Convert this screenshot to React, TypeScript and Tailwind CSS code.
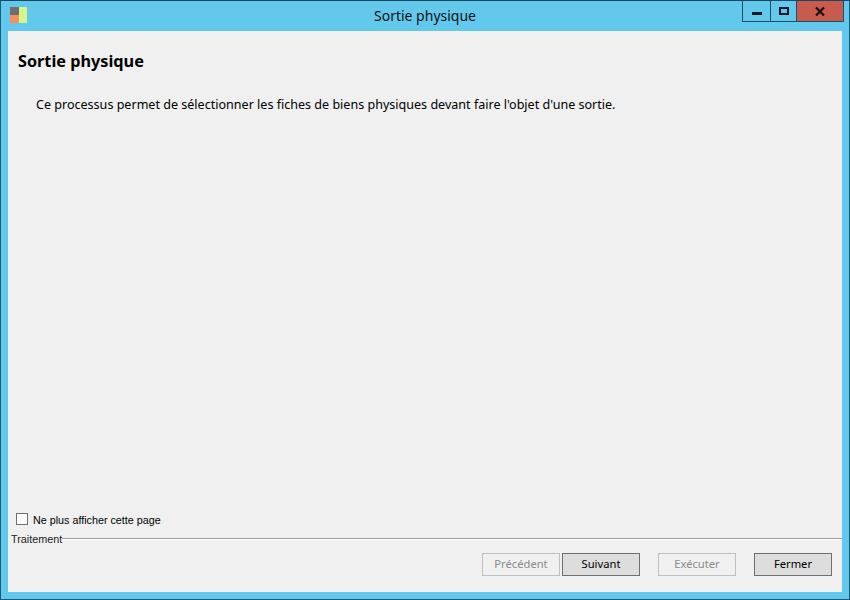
const font = "font-['Noto_Sans',sans-serif]"
const small = "font-['Liberation_Sans',sans-serif]"

function TitleButtons() {
  return (
    <div className="flex h-[21px] border border-t-0 border-[#1d4f66]">
      <button className="flex h-full w-[28px] items-end justify-center border-r border-[#1d4f66] pb-[6px]">
        <span className="block h-[3px] w-[10px] bg-[#0a1626]" />
      </button>
      <button className="flex h-full w-[26px] items-center justify-center border-r border-[#1d4f66] pb-[1px]">
        <span className="block h-[8px] w-[10px] border-2 border-[#0a1626]" />
      </button>
      <button className="flex h-full w-[46px] items-center justify-center bg-[#c75b4d]">
        <svg width="10" height="9" viewBox="0 0 10 9">
          <path d="M1 0.5 L9 8.5 M9 0.5 L1 8.5" stroke="#1a0f0c" strokeWidth="2.2" />
        </svg>
      </button>
    </div>
  )
}

function WizardButton({ label, disabled, className }: { label: string; disabled?: boolean; className?: string }) {
  return (
    <button
      disabled={disabled}
      className={`h-[23px] w-[78px] border text-[11.2px] ${disabled ? 'border-[#bfbfbf] text-[#8a8a8a]' : 'border-[#6f6f6f] bg-[#dddddd] text-black'} ${className ?? ''}`}
    >
      {label}
    </button>
  )
}

export default function App() {
  return (
    <div className={`flex h-[600px] w-[850px] flex-col overflow-hidden border border-[#1b5a78] border-t-[#17485f] bg-[#62c9ec] ${font}`}>
      <div className="relative flex h-[30px] shrink-0 items-start justify-between pl-[9px] pr-[5px]">
        <svg className="mt-[6px]" width="17" height="17" viewBox="0 0 17 17">
          <rect x="0" y="0" width="9" height="8" fill="#6e6e6e" />
          <rect x="0" y="8" width="9" height="8" fill="#f58f5e" />
          <rect x="9" y="0" width="8" height="16" fill="#d3f58e" />
        </svg>
        <span className="absolute inset-x-0 top-[5px] text-center text-[14px] leading-[20px] text-[#111]">Sortie physique</span>
        <div className="relative"><TitleButtons /></div>
      </div>
      <div className="mx-[7px] flex min-h-0 flex-1 flex-col bg-[#f0f0f0]">
        <h1 className="ml-[10px] mt-[19px] text-[16.25px] leading-[22px] font-bold text-black">Sortie physique</h1>
        <p className="ml-[28px] mt-[24px] text-[12.55px] leading-[18px] text-black">
          Ce processus permet de sélectionner les fiches de biens physiques devant faire l'objet d'une sortie.
        </p>
        <label className={`ml-[8px] mt-auto flex items-center gap-[5px] text-[10.75px] leading-[16px] text-black ${small}`}>
          <span className="mb-[2px] block h-[12px] w-[12px] border border-[#707070] bg-white" />
          Ne plus afficher cette page
        </label>
        <div className="mt-[4px] flex h-[60px] flex-col">
          <div className="relative flex items-start">
            <span className={`ml-[3px] text-[10.8px] leading-[14px] text-[#222] ${small}`}>Traitement</span>
            <span className="mt-[6px] block h-[2px] flex-1 border-b border-white bg-[#a0a0a0]" />
          </div>
          <div className="mt-[7px] flex justify-end pr-[10px]">
            <WizardButton label="Précédent" disabled />
            <WizardButton label="Suivant" className="ml-[2px]" />
            <WizardButton label="Exécuter" disabled className="ml-[18px]" />
            <WizardButton label="Fermer" className="ml-[18px]" />
          </div>
        </div>
      </div>
      <div className="h-[7px] shrink-0" />
    </div>
  )
}
